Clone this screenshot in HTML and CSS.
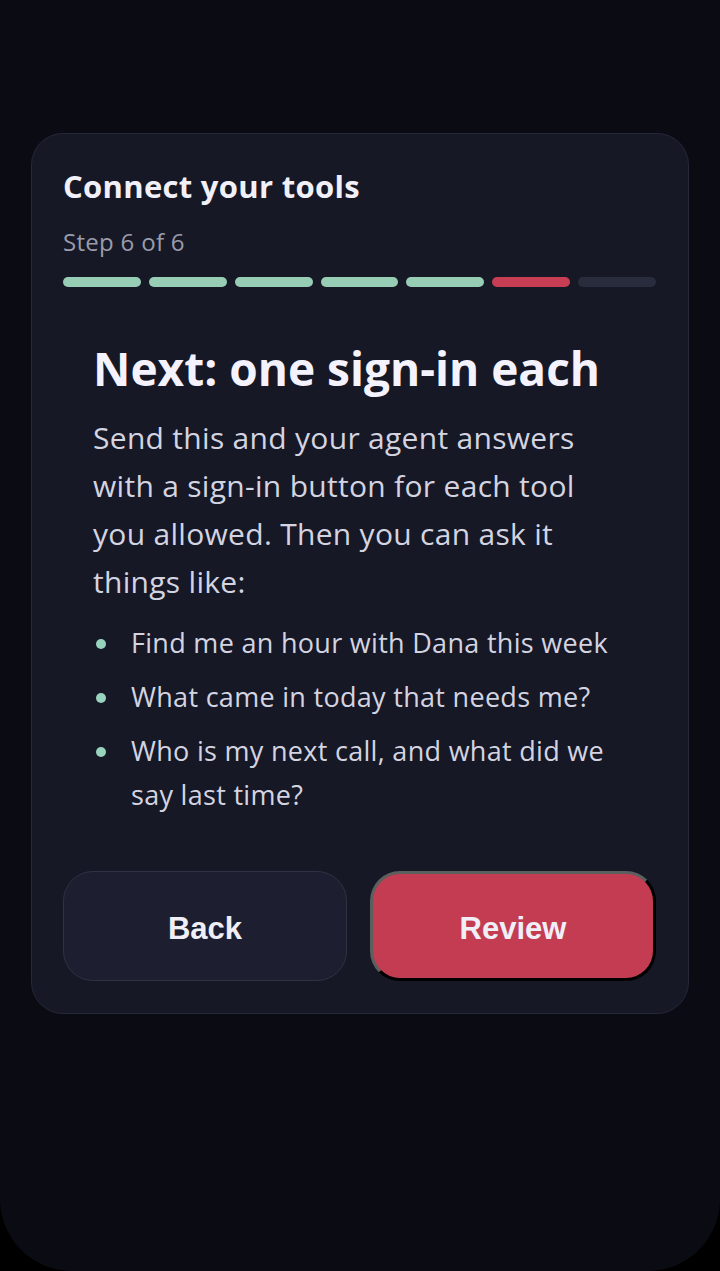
FILE: index.html
```html
<!DOCTYPE html>
<html lang="en">
<head>
<meta charset="utf-8">
<title>Connect your tools</title>
<link rel="stylesheet" href="styles.css">
</head>
<body>
<div class="screen">
  <section class="card">
    <h1 class="title">Connect your tools</h1>
    <div class="step">Step 6 of 6</div>
    <div class="progress">
      <span class="seg done"></span>
      <span class="seg done"></span>
      <span class="seg done"></span>
      <span class="seg done"></span>
      <span class="seg done"></span>
      <span class="seg current"></span>
      <span class="seg"></span>
    </div>
    <div class="content">
      <h2 class="heading">Next: one sign-in each</h2>
      <p class="body">Send this and your agent answers with a sign-in button for each tool you allowed. Then you can ask it things like:</p>
      <ul class="examples">
        <li>Find me an hour with Dana this week</li>
        <li>What came in today that needs me?</li>
        <li>Who is my next call, and what did we say last time?</li>
      </ul>
    </div>
    <div class="actions">
      <button class="btn btn-back">Back</button>
      <button class="btn btn-review">Review</button>
    </div>
  </section>
</div>
</body>
</html>
```

FILE: styles.css
```css
html, body {
  margin: 0;
  padding: 0;
  background: #000;
}
.screen {
  box-sizing: border-box;
  height: 1271px;
  background: #0b0b13;
  border-radius: 0 0 72px 72px;
  padding: 133px 31px 0;
  font-family: "Open Sans", "Lato", sans-serif;
}
.card {
  background: #161826;
  border: 1px solid #25283a;
  border-radius: 32px;
  padding: 32px 32px 32px 31px;
}
.title {
  margin: 0;
  font-size: 31px;
  letter-spacing: 0.3px;
  line-height: 40px;
  font-weight: 700;
  color: #f1f0f8;
}
.step {
  margin-top: 21px;
  font-size: 24px;
  letter-spacing: 0.3px;
  line-height: 30px;
  color: #9a9cab;
}
.progress {
  margin-top: 20px;
  display: flex;
  gap: 8px;
}
.seg {
  flex: 1;
  height: 10px;
  border-radius: 5px;
  background: #292c3c;
}
.seg.done { background: #97cdb5; }
.seg.current { background: #c73d53; }
.content {
  padding: 0 30px;
}
.heading {
  margin: 55px 0 0;
  font-size: 46px;
  line-height: 52px;
  font-weight: 700;
  color: #f4f2fc;
}
.body {
  margin: 20px 0 0;
  font-size: 30px;
  letter-spacing: 0.3px;
  line-height: 48px;
  color: #d4d4e1;
}
.examples {
  margin: 15px 0 0;
  padding: 0;
  list-style: none;
}
.examples li {
  position: relative;
  padding-left: 38px;
  font-size: 27px;
  letter-spacing: 0.3px;
  line-height: 44px;
  color: #d4d4e1;
}
.examples li + li {
  margin-top: 10px;
}
.examples li::before {
  content: "";
  position: absolute;
  left: 3px;
  top: 18px;
  width: 10px;
  height: 10px;
  border-radius: 50%;
  background: #97d3bd;
}
.actions {
  margin-top: 54px;
  display: grid;
  grid-template-columns: 284px 1fr;
  gap: 23px;
}
.btn {
  height: 110px;
  padding: 5px 0 0;
  border-radius: 30px;
  font-family: "Liberation Sans", Arial, sans-serif;
  font-weight: 700;
  font-size: 31px;
  color: #f0eff8;
}
.btn-back {
  background: #1d1f30;
  border: 1.5px solid #2f3244;
}
.btn-review {
  background: #c43c51;
  border-style: solid;
  border-width: 3px;
  border-color: #5b605f #000 #000 #5b605f;
}
```
